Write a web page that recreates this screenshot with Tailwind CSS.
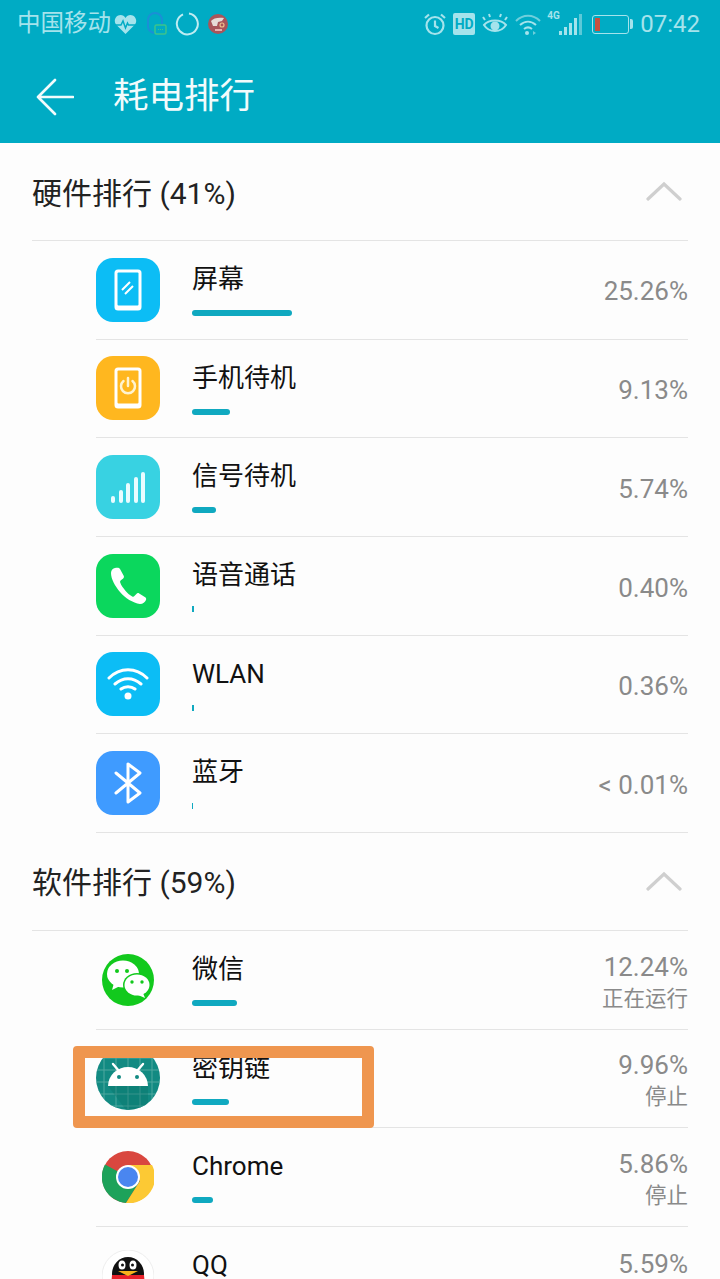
<!DOCTYPE html>
<html lang="en">
  <head>
    <meta charset="UTF-8" />
    <meta name="viewport" content="width=device-width, initial-scale=1.0" />
    <title>耗电排行</title>
    <script src="https://cdn.jsdelivr.net/npm/@tailwindcss/browser@4"></script>
  </head>
  <body class="bg-[#fdfdfd] font-['Roboto','Noto_Sans_CJK_SC',sans-serif]">
    <div class="relative w-[720px] h-[1279px] overflow-hidden">
      <!-- status bar + title -->
      <div class="bg-[#00abc4] h-[143px]">
        <div class="h-[48px] flex items-center justify-between pl-[17px] pr-[20px] text-[#a5e3ec] text-[24px]">
          <div class="flex items-center">
            <span class="text-[23.5px]">中国移动</span>
            <svg class="ml-[3px]" width="23" height="21" viewBox="0 0 23 21">
              <path d="M11.500 20 2 10.500C-1 6.500 2 1 6.500 1c2.200 0 4 1 5 3 1-2 2.800-3 5-3C21 1 24 6.500 21 10.500z" fill="#a5e3ec" />
              <path d="M1 11h6l2-4 2.500 7 2-5 1 2h7" fill="none" stroke="#00abc4" stroke-width="1.500" />
            </svg>
            <svg class="ml-[9px]" width="22" height="26" viewBox="0 0 22 26">
              <path d="M2 16V9a7 7 0 0 1 14 0v5" fill="none" stroke="#1a8fd6" stroke-width="2" />
              <path d="M2 16c0 3 3 5 6 6" fill="none" stroke="#1a8fd6" stroke-width="2" />
              <rect x="9" y="14" width="11" height="9" rx="1.500" fill="#00abc4" stroke="#3cc48a" stroke-width="1.500" />
              <path d="M12 18.500h5" stroke="#3cc48a" stroke-width="1.200" stroke-dasharray="1 1" />
            </svg>
            <svg class="ml-[7px]" width="24" height="24" viewBox="0 0 24 24">
              <path d="M14 1.500A10.500 10.500 0 1 1 8 2.300" fill="none" stroke="#bfecf2" stroke-width="2" />
            </svg>
            <svg class="ml-[8px]" width="22" height="22" viewBox="0 0 22 22">
              <circle cx="11" cy="11" r="10" fill="#a8555a" />
              <path d="M4 8c2-3 8-4 13-3l-2 3-4 1-1 4H6z" fill="#e6dcd8" />
              <circle cx="15" cy="12" r="2" fill="none" stroke="#eec08a" stroke-width="1.200" />
              <rect x="8" y="16" width="7" height="2" fill="#e6b0b0" />
            </svg>
          </div>
          <div class="flex items-center">
            <svg width="24" height="24" viewBox="0 0 24 24" fill="none" stroke="#a5e3ec" stroke-width="2.200">
              <circle cx="12" cy="13.500" r="8.500" />
              <path d="M12 8.500v5.500l3.500 2M2 6l4-3.500M22 6l-4-3.500" />
            </svg>
            <div class="ml-[6px] w-[22px] h-[22px] rounded-[2px] bg-[#a5e3ec] text-[#00abc4] text-[14px] leading-[22px] font-bold text-center">HD</div>
            <svg class="ml-[7px]" width="26" height="24" viewBox="0 0 26 24" fill="none" stroke="#a5e3ec" stroke-width="2">
              <path d="M2 13c5-6 17-6 22 0-5 8-17 8-22 0z" />
              <circle cx="13" cy="14" r="3.500" fill="#a5e3ec" />
              <path d="M3 8 1 5M8 5 7 2M18 5l1-3M23 8l2-3" />
            </svg>
            <svg class="ml-[7px]" width="26" height="24" viewBox="0 0 26 24" fill="none">
              <path d="M1 9c7-7 17-7 24 0" stroke="#6fcfdc" stroke-width="2" />
              <path d="M5 13c5-4.500 11-4.500 16 0M9 17c2.500-2 5.500-2 8 0" stroke="#a5e3ec" stroke-width="2" />
              <circle cx="12" cy="21" r="2" fill="#a5e3ec" />
              <path d="m18 19 3 2-3 2z" fill="#6fcfdc" />
            </svg>
            <div class="ml-[5px] w-[36px] h-[24px] relative">
              <span class="absolute left-[1px] -top-[2px] text-[10px] leading-[12px] font-bold">4G</span>
              <div class="absolute bottom-[1px] right-0 flex items-end gap-[2px]">
                <div class="w-[3px] h-[4px] bg-[#a5e3ec]"></div>
                <div class="w-[3px] h-[8px] bg-[#a5e3ec]"></div>
                <div class="w-[3px] h-[12px] bg-[#a5e3ec]"></div>
                <div class="w-[3px] h-[17px] bg-[#a5e3ec]"></div>
                <div class="w-[3px] h-[21px] bg-[#5cc9d8]"></div>
              </div>
            </div>
            <div class="ml-[10px] w-[37px] h-[19px] border-[1.5px] border-[#a5e3ec] rounded-[3px] p-[2px]">
              <div class="w-[5px] h-full bg-[#c8503f]"></div>
            </div>
            <div class="ml-[1px] w-[3px] h-[10px] bg-[#a5e3ec] rounded-r-[2px]"></div>
            <span class="ml-[7px]">07:42</span>
          </div>
        </div>
        <div class="h-[95px] flex items-center pl-[36px] pt-[2px]">
          <svg width="38" height="38" viewBox="0 0 38 38" fill="none" stroke="#f2fbfc" stroke-width="2.600" stroke-linecap="round" stroke-linejoin="round">
            <path d="M19 2 2 19l17 17M2 19h35" />
          </svg>
          <span class="ml-[39px] text-[35.5px] leading-none text-[#f2fbfc]">耗电排行</span>
        </div>
      </div>

      <!-- hardware -->
      <div class="h-[98px] mx-[32px] border-b border-[#e4e4e4] flex items-center justify-between">
        <span class="text-[30px] text-[#222] pt-[3px]">硬件排行 (41%)</span>
        <svg class="mr-[6px] -mt-[1px]" width="36" height="20" viewBox="0 0 36 20" fill="none" stroke="#cfcfcf" stroke-width="3.200" stroke-linecap="round"><path d="M2 18 18 3l16 15" /></svg>
      </div>

      <div class="ml-[96px] mr-[32px]">
        <div class="h-[98.67px] border-b border-[#e4e4e4] flex items-center">
          <div class="w-[64px] h-[64px] rounded-[17px] bg-[#0cbdf5] flex items-center justify-center">
            <svg width="28" height="42" viewBox="0 0 28 42">
              <rect x="0.500" y="0.500" width="27" height="41" rx="3.500" fill="#fff" />
              <rect x="3.500" y="3.500" width="21" height="33" rx="1" fill="#0cbdf5" />
              <path d="m8 21 8-8M11 25l8-8" stroke="#fff" stroke-width="2" fill="none" />
            </svg>
          </div>
          <div class="ml-[32px] flex-1 self-start pt-[21px]">
            <div class="text-[26px] leading-[34px] text-[#111]">屏幕</div>
            <div class="mt-[14px] h-[6px] w-[100px] rounded-full bg-[#10a9c0]"></div>
          </div>
          <div class="text-[26px] text-[#8a8a8a] pt-[4px]">25.26%</div>
        </div>

        <div class="h-[98.67px] border-b border-[#e4e4e4] flex items-center">
          <div class="w-[64px] h-[64px] rounded-[17px] bg-[#ffb71f] flex items-center justify-center">
            <svg width="28" height="42" viewBox="0 0 28 42" fill="none">
              <rect x="0.500" y="0.500" width="27" height="41" rx="3.500" fill="#fff" />
              <rect x="3.500" y="3.500" width="21" height="33" rx="1" fill="#ffb71f" />
              <path d="M9.500 14a7 7 0 1 0 9 0M14 11v8" stroke-width="2.500" stroke="#fff3d0" stroke-linecap="round" />
            </svg>
          </div>
          <div class="ml-[32px] flex-1 self-start pt-[21px]">
            <div class="text-[26px] leading-[34px] text-[#111]">手机待机</div>
            <div class="mt-[14px] h-[6px] w-[38px] rounded-full bg-[#10a9c0]"></div>
          </div>
          <div class="text-[26px] text-[#8a8a8a] pt-[5px]">9.13%</div>
        </div>

        <div class="h-[98.67px] border-b border-[#e4e4e4] flex items-center">
          <div class="w-[64px] h-[64px] rounded-[17px] bg-[#38d2e2] flex items-end justify-center pb-[16px]">
            <div class="flex items-end gap-[3.500px]">
              <div class="w-[4px] h-[7px] rounded-full bg-[#eafcff]"></div>
              <div class="w-[4px] h-[13px] rounded-full bg-[#eafcff]"></div>
              <div class="w-[4px] h-[20px] rounded-full bg-[#eafcff]"></div>
              <div class="w-[4px] h-[26px] rounded-full bg-[#eafcff]"></div>
              <div class="w-[4px] h-[31px] rounded-full bg-[#eafcff]"></div>
            </div>
          </div>
          <div class="ml-[32px] flex-1 self-start pt-[21px]">
            <div class="text-[26px] leading-[34px] text-[#111]">信号待机</div>
            <div class="mt-[14px] h-[6px] w-[24px] rounded-full bg-[#10a9c0]"></div>
          </div>
          <div class="text-[26px] text-[#8a8a8a] pt-[5px]">5.74%</div>
        </div>

        <div class="h-[98.67px] border-b border-[#e4e4e4] flex items-center">
          <div class="w-[64px] h-[64px] rounded-[17px] bg-[#0bd75d] flex items-center justify-center">
            <svg width="40" height="40" viewBox="0 0 40 40">
              <path d="M7 2c-2 .5-4 2-4 5 0 6 4 13 9 19s13 11 20 12c3 0 5-2 6-4 .4-1 .2-2-.8-2.700l-6-3.800c-1-.6-2-.5-2.800.4l-2 2.200c-.6.7-1.400.8-2.200.3-2.500-1.400-5-3.500-7-6s-4-5-5-8c-.3-.8 0-1.600.7-2.100l2.300-1.800c.8-.7 1-1.700.5-2.700L12 3c-.6-1-2-1.500-5-1z" fill="#fff" />
            </svg>
          </div>
          <div class="ml-[32px] flex-1 self-start pt-[21px]">
            <div class="text-[26px] leading-[34px] text-[#111]">语音通话</div>
            <div class="mt-[14px] h-[6px] w-[2px] bg-[#10a9c0]"></div>
          </div>
          <div class="text-[26px] text-[#8a8a8a] pt-[5px]">0.40%</div>
        </div>

        <div class="h-[98.67px] border-b border-[#e4e4e4] flex items-center">
          <div class="w-[64px] h-[64px] rounded-[17px] bg-[#0cbdf5] flex items-center justify-center">
            <svg width="42" height="34" viewBox="0 0 42 34" fill="none" stroke="#fff" stroke-width="3" stroke-linecap="round">
              <path d="M2 11c11-11 27-11 38 0M8 17c8-7 18-7 26 0M14 22c4-3 10-3 14 0" />
              <circle cx="21" cy="29" r="3.500" fill="#fff" stroke="none" />
            </svg>
          </div>
          <div class="ml-[32px] flex-1 self-start pt-[21px]">
            <div class="text-[26px] leading-[34px] text-[#111]">WLAN</div>
            <div class="mt-[14px] h-[6px] w-[2px] bg-[#10a9c0]"></div>
          </div>
          <div class="text-[26px] text-[#8a8a8a] pt-[5px]">0.36%</div>
        </div>

        <div class="h-[98.67px] border-b border-[#e4e4e4] flex items-center">
          <div class="w-[64px] h-[64px] rounded-[17px] bg-[#3f9bff] flex items-center justify-center">
            <svg width="28" height="42" viewBox="0 0 28 42" fill="none" stroke="#fff" stroke-width="3" stroke-linecap="round" stroke-linejoin="round">
              <path d="M2 31 26 11 14 2v38l12-9L2 11" />
            </svg>
          </div>
          <div class="ml-[32px] flex-1 self-start pt-[21px]">
            <div class="text-[26px] leading-[34px] text-[#111]">蓝牙</div>
            <div class="mt-[14px] h-[6px] w-[1px] bg-[#10a9c0]"></div>
          </div>
          <div class="text-[26px] text-[#8a8a8a] pt-[5px]">&lt; 0.01%</div>
        </div>
      </div>

      <!-- software -->
      <div class="h-[98px] mx-[32px] border-b border-[#e4e4e4] flex items-center justify-between">
        <span class="text-[30px] text-[#222] pt-[3px]">软件排行 (59%)</span>
        <svg class="mr-[6px] -mt-[1px]" width="36" height="20" viewBox="0 0 36 20" fill="none" stroke="#cfcfcf" stroke-width="3.200" stroke-linecap="round"><path d="M2 18 18 3l16 15" /></svg>
      </div>

      <div class="ml-[96px] mr-[32px]">
        <div class="h-[98.67px] border-b border-[#e4e4e4] flex items-center">
          <div class="w-[64px] h-[64px] flex items-center justify-center">
            <svg width="52" height="52" viewBox="0 0 52 52">
              <circle cx="26" cy="26" r="26" fill="#12c91d" />
              <ellipse cx="21" cy="20" rx="16" ry="13.500" fill="#fff" />
              <path d="m12 29-2 7 8-4z" fill="#fff" />
              <ellipse cx="35" cy="31" rx="14" ry="12" fill="#12c91d" />
              <ellipse cx="35" cy="31" rx="12.500" ry="10.500" fill="#fff" />
              <path d="m41 39 2 5-7-3z" fill="#fff" />
              <circle cx="15" cy="17" r="2" fill="#12c91d" /><circle cx="25" cy="17" r="2" fill="#12c91d" />
              <circle cx="30" cy="28" r="1.700" fill="#12c91d" /><circle cx="40" cy="28" r="1.700" fill="#12c91d" />
            </svg>
          </div>
          <div class="ml-[32px] flex-1 self-start pt-[21px]">
            <div class="text-[26px] leading-[34px] text-[#111]">微信</div>
            <div class="mt-[14px] h-[6px] w-[45px] rounded-full bg-[#10a9c0]"></div>
          </div>
          <div class="text-right text-[#8a8a8a] text-[26px] leading-[32px] pt-[6px]">
            <div>12.24%</div>
            <div class="text-[21.5px]">正在运行</div>
          </div>
        </div>

        <div class="h-[98.67px] border-b border-[#e4e4e4] flex items-center">
          <div class="w-[64px] h-[64px] rounded-full bg-[#128a82] overflow-hidden">
            <svg width="64" height="64" viewBox="0 0 64 64">
              <path d="M0 12h64M0 24h64M0 36h64M0 48h64M0 60h64M8 0v64M20 0v64M32 0v64M44 0v64M56 0v64" stroke="#4fa89f" stroke-width="1" />
              <path d="M12 40h40v24H30z" fill="#0a6f68" opacity="0.350" />
              <path d="M12 40a20 19 0 0 1 40 0z" fill="#fff" />
              <path d="m17 18 6 7M47 18l-6 7" stroke="#fff" stroke-width="2.400" stroke-linecap="round" />
              <circle cx="23" cy="31" r="2" fill="#128a82" /><circle cx="41" cy="31" r="2" fill="#128a82" />
            </svg>
          </div>
          <div class="ml-[32px] flex-1 self-start pt-[21px]">
            <div class="text-[26px] leading-[34px] text-[#111]">密钥链</div>
            <div class="mt-[14px] h-[6px] w-[37px] rounded-full bg-[#10a9c0]"></div>
          </div>
          <div class="text-right text-[#8a8a8a] text-[26px] leading-[32px] pt-[6px]">
            <div>9.96%</div>
            <div class="text-[21.5px]">停止</div>
          </div>
        </div>

        <div class="h-[98.67px] border-b border-[#e4e4e4] flex items-center">
          <div class="w-[64px] h-[64px] flex items-center justify-center">
            <svg width="52" height="52" viewBox="0 0 52 52">
              <circle cx="26" cy="26" r="26" fill="#d9473f" />
              <path d="M26 26 3 13.500A26 26 0 0 0 24 51.900L38 30z" fill="#1da25a" />
              <path d="M26 14h24a26 26 0 0 1-26 38l14-22z" fill="#fcc934" />
              <circle cx="26" cy="26" r="12" fill="#fff" />
              <circle cx="26" cy="26" r="10" fill="#4a86f0" />
            </svg>
          </div>
          <div class="ml-[32px] flex-1 self-start pt-[21px]">
            <div class="text-[26px] leading-[34px] text-[#111]">Chrome</div>
            <div class="mt-[14px] h-[6px] w-[21px] rounded-full bg-[#10a9c0]"></div>
          </div>
          <div class="text-right text-[#8a8a8a] text-[26px] leading-[32px] pt-[6px]">
            <div>5.86%</div>
            <div class="text-[21.5px]">停止</div>
          </div>
        </div>

        <div class="h-[98.67px] flex items-center">
          <div class="w-[64px] h-[64px] flex items-center justify-center">
            <svg width="52" height="52" viewBox="0 0 52 52">
              <circle cx="26" cy="26" r="26" fill="#fff" stroke="#eee" />
              <ellipse cx="26" cy="24" rx="16" ry="17" fill="#111" />
              <path d="M10 25h32l2 23H8z" fill="#e8202a" />
              <ellipse cx="20" cy="15" rx="3.500" ry="4.500" fill="#fff" /><ellipse cx="31" cy="15" rx="3.500" ry="4.500" fill="#fff" />
              <circle cx="20.500" cy="15" r="1.500" fill="#111" /><circle cx="30.500" cy="15" r="1.500" fill="#111" />
              <path d="M16 21h20l-10 5z" fill="#f5b21c" />
            </svg>
          </div>
          <div class="ml-[32px] flex-1 self-start pt-[21px]">
            <div class="text-[26px] leading-[34px] text-[#111]">QQ</div>
          </div>
          <div class="self-start pt-[21px] text-right text-[#8a8a8a] text-[26px] leading-[32px]">5.59%</div>
        </div>
      </div>

      <!-- annotation drawn on top of the screenshot -->
      <div class="absolute left-[73px] top-[1046px] w-[301px] h-[82px] border-[12px] border-[#ef964f] rounded-[4px]"></div>
    </div>
  </body>
</html>
